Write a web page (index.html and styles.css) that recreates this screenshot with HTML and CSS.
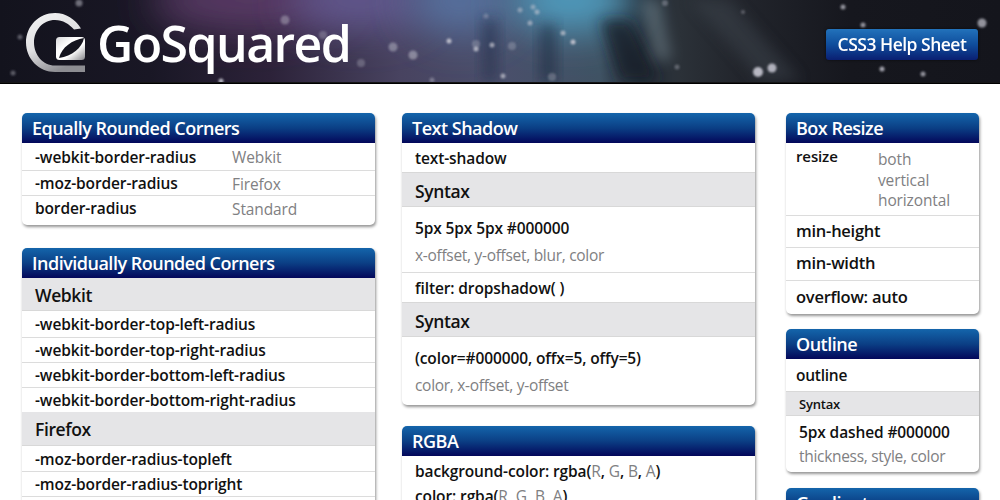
FILE: index.html
```html
<!DOCTYPE html>
<html lang="en">
<head>
<meta charset="utf-8">
<title>GoSquared CSS3 Help Sheet</title>
<link rel="stylesheet" href="styles.css">
</head>
<body>
<header class="masthead">
  <svg class="sky" width="1000" height="82" viewBox="0 0 1000 82" aria-hidden="true">
    <defs>
      <linearGradient id="base">
        <stop offset="0" stop-color="#13131d"/>
        <stop offset=".15" stop-color="#191725"/>
        <stop offset=".27" stop-color="#2c2239"/>
        <stop offset=".4" stop-color="#484360"/>
        <stop offset=".5" stop-color="#4a4f6b"/>
        <stop offset=".6" stop-color="#3f5263"/>
        <stop offset=".64" stop-color="#27313c"/>
        <stop offset=".68" stop-color="#2b3138"/>
        <stop offset=".74" stop-color="#22252c"/>
        <stop offset=".85" stop-color="#16171e"/>
        <stop offset="1" stop-color="#14151c"/>
      </linearGradient>
      <filter id="b30" x="-50%" y="-100%" width="200%" height="300%"><feGaussianBlur stdDeviation="20"/></filter>
      <filter id="b10" x="-50%" y="-100%" width="200%" height="300%"><feGaussianBlur stdDeviation="7"/></filter>
      <filter id="b1"><feGaussianBlur stdDeviation="0.8"/></filter>
    </defs>
    <rect width="1000" height="82" fill="url(#base)"/>
    <ellipse cx="250" cy="0" rx="100" ry="30" fill="#5a3a66" filter="url(#b30)"/>
    <ellipse cx="360" cy="0" rx="70" ry="30" fill="#62598f" filter="url(#b30)"/>
    <ellipse cx="460" cy="0" rx="50" ry="35" fill="#56719f" filter="url(#b30)"/>
    <ellipse cx="570" cy="0" rx="60" ry="32" fill="#4f9dc0" filter="url(#b30)"/>
    <path d="M482 20 L498 20 L496 82 L484 82 Z" fill="#1f2b44" opacity=".55" filter="url(#b10)"/>
    <path d="M540 25 L556 25 L556 82 L540 82 Z" fill="#1c2a40" opacity=".6" filter="url(#b10)"/>
    <path d="M600 20 L630 20 L660 82 L620 82 Z" fill="#141a28" opacity=".75" filter="url(#b10)"/>
    <path d="M640 0 L660 0 L672 60 L655 60 Z" fill="#8a9ea6" opacity=".4" filter="url(#b10)"/>
    <path d="M690 0 L730 0 L800 80 L760 80 Z" fill="#3c444e" opacity=".5" filter="url(#b10)"/>
    <g fill="#c7c7d2" filter="url(#b1)">
      <circle cx="79" cy="3" r="3.500" opacity=".5"/>
      <circle cx="285" cy="20" r="4.500" opacity=".4"/>
      <circle cx="323" cy="35" r="4" opacity=".3"/>
      <circle cx="393" cy="47" r="4.500" opacity=".45"/>
      <circle cx="361" cy="63" r="4" opacity=".3"/>
      <circle cx="20" cy="37" r="2.500" opacity=".4"/>
      <circle cx="13" cy="73" r="2.500" opacity=".4"/>
      <circle cx="221" cy="81" r="2.500" opacity=".9"/>
      <circle cx="413" cy="55" r="4.500" opacity=".5"/>
      <circle cx="449" cy="41" r="2.500" opacity=".9"/>
      <circle cx="476" cy="44" r="4" opacity=".3"/>
      <circle cx="476" cy="49" r="2.500" opacity=".8"/>
      <circle cx="492" cy="45" r="2.500" opacity=".7"/>
      <circle cx="512" cy="46" r="4" opacity=".3"/>
      <circle cx="503" cy="76" r="2.500" opacity=".7"/>
      <circle cx="552" cy="77" r="4" opacity=".3"/>
      <circle cx="432" cy="80" r="2.500" opacity=".4"/>
      <circle cx="486" cy="16" r="2.500" opacity=".3"/>
      <circle cx="520" cy="10" r="2.500" opacity=".5"/>
      <circle cx="533" cy="7" r="2.500" opacity=".5"/>
      <circle cx="537" cy="12" r="2.500" opacity=".6"/>
      <circle cx="530" cy="23" r="2.500" opacity=".6"/>
      <circle cx="563" cy="33" r="2.500" opacity=".7"/>
      <circle cx="573" cy="42" r="2.500" opacity=".9"/>
      <circle cx="665" cy="3" r="3" opacity=".35"/>
      <circle cx="843" cy="7" r="2.500" opacity=".7"/>
      <circle cx="863" cy="25" r="2.500" opacity=".7"/>
      <circle cx="982" cy="23" r="4.500" opacity=".7"/>
      <circle cx="758" cy="72" r="5" opacity=".9"/>
      <circle cx="772" cy="68" r="4.500" opacity=".85"/>
      <circle cx="882" cy="69" r="2.500" opacity=".8"/>
      <circle cx="923" cy="74" r="2.500" opacity=".7"/>
      <circle cx="677" cy="67" r="2.500" opacity=".35"/>
      <circle cx="743" cy="12" r="2" opacity=".35"/>
    </g>
  </svg>
  <div class="brand">
    <svg class="logo" width="60" height="60" viewBox="26 13 60 60" aria-hidden="true">
      <defs>
        <linearGradient id="ring" x1="0" y1="0" x2="0.5" y2="1">
          <stop offset="0" stop-color="#f4f4f4"/>
          <stop offset=".55" stop-color="#e0e0e2"/>
          <stop offset="1" stop-color="#8d8d92"/>
        </linearGradient>
        <linearGradient id="leaf" x1="0" y1="0" x2="1" y2="1">
          <stop offset="0" stop-color="#d8d8da"/>
          <stop offset=".35" stop-color="#ffffff"/>
          <stop offset=".62" stop-color="#ffffff"/>
          <stop offset="1" stop-color="#85858a"/>
        </linearGradient>
      </defs>
      <path fill="url(#ring)" d="M81 28.500C75 19 66 13 55 13C39 13 26 26 26 42.500C26 59 39 72 55 72L85 72L85 65.500L55 65.500C43 65.500 34 55 34 42.500C34 30 43 20 55 20C63 20 69 24 74 29.500Z"/>
      <rect x="56" y="37" width="29" height="23" rx="3.500" fill="url(#leaf)"/>
      <path fill="#15151f" d="M59 58C62 47 72 40 84 38C82 48 72 56 59 58Z"/>
    </svg>
    <span class="wordmark">GoSquared</span>
  </div>
  <div class="sheet-tag">CSS3 Help Sheet</div>
</header>

<main class="columns">
  <div class="col col-wide">
    <section class="card">
      <h2 class="card-title">Equally Rounded Corners</h2>
      <div class="row row-pair r1"><b>-webkit-border-radius</b><span class="note">Webkit</span></div>
      <div class="row row-pair r2"><b>-moz-border-radius</b><span class="note">Firefox</span></div>
      <div class="row row-pair r3"><b>border-radius</b><span class="note">Standard</span></div>
    </section>
    <section class="card">
      <h2 class="card-title">Individually Rounded Corners</h2>
      <h3 class="band">Webkit</h3>
      <div class="row r25 r-first">-webkit-border-top-left-radius</div>
      <div class="row r25">-webkit-border-top-right-radius</div>
      <div class="row r25">-webkit-border-bottom-left-radius</div>
      <div class="row r25 flat">-webkit-border-bottom-right-radius</div>
      <h3 class="band band-tall">Firefox</h3>
      <div class="row r25 r-second">-moz-border-radius-topleft</div>
      <div class="row r25">-moz-border-radius-topright</div>
      <div class="row r25">-moz-border-radius-bottomleft</div>
    </section>
  </div>

  <div class="col col-wide col-mid">
    <section class="card">
      <h2 class="card-title">Text Shadow</h2>
      <div class="row r-name flat">text-shadow</div>
      <h3 class="band band-mid">Syntax</h3>
      <div class="syntax">
        <b>5px 5px 5px #000000</b>
        <span class="note">x-offset, y-offset, blur, color</span>
      </div>
      <div class="row r-filter flat">filter: dropshadow( )</div>
      <h3 class="band band-mid">Syntax</h3>
      <div class="syntax syntax-end">
        <b>(color=#000000, offx=5, offy=5)</b>
        <span class="note">color, x-offset, y-offset</span>
      </div>
    </section>
    <section class="card">
      <h2 class="card-title">RGBA</h2>
      <div class="row r-rgba flat">background-color: rgba(<span class="note">R</span>, <span class="note">G</span>, <span class="note">B</span>, <span class="note">A</span>)</div>
      <div class="row r-rgba flat">color: rgba(<span class="note">R</span>, <span class="note">G</span>, <span class="note">B</span>, <span class="note">A</span>)</div>
    </section>
  </div>

  <div class="col col-narrow">
    <section class="card">
      <h2 class="card-title">Box Resize</h2>
      <div class="resize">
        <b>resize</b>
        <span class="note note-list">both<br>vertical<br>horizontal</span>
      </div>
      <div class="row big big-first">min-height</div>
      <div class="row big">min-width</div>
      <div class="row big flat big-last">overflow: auto</div>
    </section>
    <section class="card">
      <h2 class="card-title">Outline</h2>
      <div class="row big flat big-outline">outline</div>
      <h3 class="band band-small">Syntax</h3>
      <div class="syntax syntax-small">
        <b>5px dashed #000000</b>
        <span class="note">thickness, style, color</span>
      </div>
    </section>
    <section class="card">
      <h2 class="card-title">Gradients</h2>
    </section>
  </div>
</main>
</body>
</html>
```
FILE: styles.css
```css
* { box-sizing: border-box; }
html, body { margin: 0; height: 500px; overflow: hidden; background: #fff; }
body { font-family: "Open Sans", "Liberation Sans", sans-serif; color: #111; }

.masthead {
  position: relative;
  height: 84px;
  display: flex;
  align-items: flex-start;
  justify-content: space-between;
  padding: 13px 22px 0 26px;
  background: linear-gradient(#55555a 0, #55555a 81px, #000 83px);
}
.sky { position: absolute; left: 0; top: 0; }
.brand { position: relative; display: flex; align-items: center; gap: 11px; }
.logo { display: block; }
.wordmark { color: #fff; font-size: 50px; font-weight: 600; letter-spacing: -1.6px; line-height: 60px; }
.sheet-tag {
  position: relative;
  margin-top: 16px;
  width: 152px;
  height: 31px;
  border-radius: 3px;
  background: linear-gradient(#2272bb, #0f4d9c 50%, #0a1f72);
  color: #fff;
  font-size: 17.500px;
  font-weight: 600;
  letter-spacing: -.5px;
  line-height: 30px;
  text-align: center;
  box-shadow: 0 0 3px rgba(0,0,0,.6);
}

.columns { display: flex; padding: 29px 21px 0 22px; gap: 27px; }
.col { display: flex; flex-direction: column; gap: 23px; }
.col-wide { width: 353px; }
.col-mid { gap: 21px; }
.col-narrow { width: 193px; margin-left: 4px; gap: 15px; }
.col-narrow .card + .card + .card { margin-top: 1px; }

.card {
  background: #fff;
  border-radius: 5px;
  box-shadow: 1px 2px 3px rgba(0,0,0,.42);
}
.card-title {
  margin: 0;
  height: 30px;
  padding-left: 10px;
  border-radius: 5px 5px 0 0;
  background: linear-gradient(#1465ab, #0b3f85 50%, #03075a);
  color: #fff;
  font-size: 18px;
  font-weight: 600;
  letter-spacing: -.5px;
  line-height: 30px;
}
.row {
  padding-left: 13px;
  border-bottom: 1px solid #dcdcdc;
  font-size: 15.500px;
  font-weight: 600;
  letter-spacing: -.12px;
}
.row b, .syntax b, .resize b { font-weight: 600; }
.note { color: #808082; font-weight: 400; }
.flat { border-bottom: 0; }

.row-pair { display: grid; grid-template-columns: 197px 1fr; }
.r1 { height: 28px; line-height: 29px; }
.r2 { height: 25px; line-height: 25px; }
.r3 { height: 29px; line-height: 25px; border-bottom: 0; }
.r3 .note, .r2 .note { line-height: 27px; }
.r25 { height: 25px; line-height: 25px; }
.r25.flat { height: 24px; }
.r25.r-first { height: 27px; line-height: 27px; }
.r25.r-second { height: 26px; line-height: 26px; }

.band {
  margin: 0;
  height: 33px;
  padding-left: 13px;
  background: #e5e5e7;
  border-bottom: 1px solid #d8d8d8;
  font-size: 17.500px;
  font-weight: 600;
  letter-spacing: -.4px;
  line-height: 34px;
}
.band-tall { height: 34px; line-height: 35px; }
.band-mid { height: 35px; line-height: 36px; border-top: 1px solid #d8d8d8; }
.band-small { height: 25px; font-size: 13px; line-height: 25px; padding-left: 13px; letter-spacing: -.2px; border-top: 1px solid #d8d8d8; }

.r-name { height: 29px; line-height: 30px; }
.r-filter { height: 30px; line-height: 30px; border-top: 1px solid #dcdcdc; }
.r-rgba { height: 25px; line-height: 31px; }
.syntax {
  display: flex;
  flex-direction: column;
  height: 65px;
  padding: 8px 0 0 13px;
  font-size: 15.500px;
  letter-spacing: -.12px;
  line-height: 27px;
}
.syntax .note { letter-spacing: -.3px; }
.syntax-end { height: 68px; }
.syntax-small { height: 56px; padding: 3px 0 0 13px; }
.syntax-small .note { line-height: 21px; }

.resize {
  display: grid;
  grid-template-columns: 82px 1fr;
  align-items: start;
  height: 73px;
  padding-left: 10px;
  border-bottom: 1px solid #dcdcdc;
  font-size: 15.500px;
  letter-spacing: -.12px;
  line-height: 26px;
}
.resize b { font-size: 15px; }
.note-list { line-height: 20.500px; padding-top: 6px; }
.big { height: 33px; padding-left: 10px; font-size: 16.500px; letter-spacing: -.25px; line-height: 30px; }
.big-first { height: 32px; }
.big-last { line-height: 31px; }
.big-outline { height: 32px; line-height: 32px; font-size: 15.500px; }
```
